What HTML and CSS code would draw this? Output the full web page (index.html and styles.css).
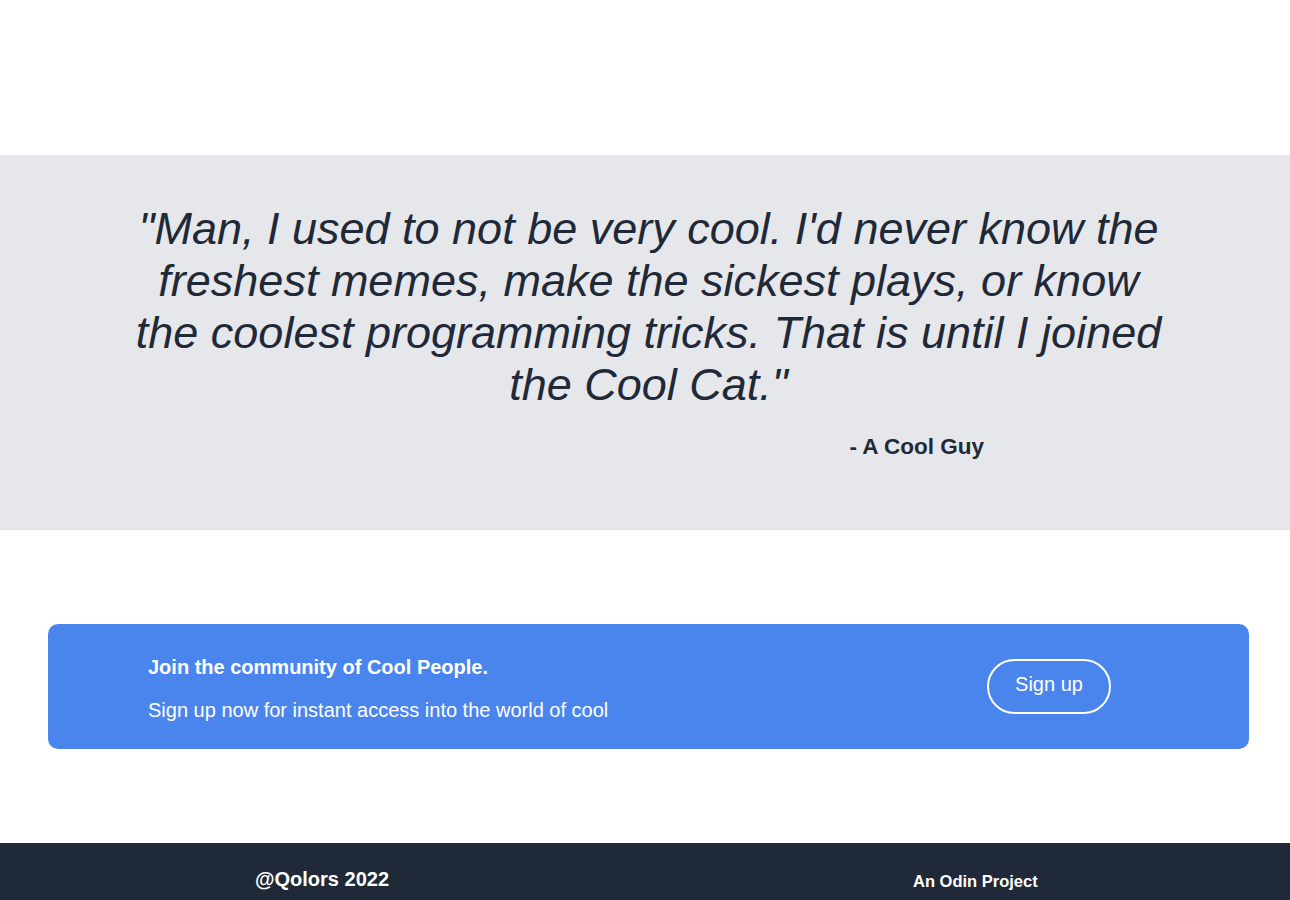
FILE: index.html
```html
<!DOCTYPE html>
<html lang="en">
<head>
<meta charset="utf-8">
<title>Cool Cat</title>
<link rel="stylesheet" href="styles.css">
</head>
<body>
  <div class="top-space"></div>
  <section class="quote-section">
    <blockquote class="quote">"Man, I used to not be very cool. I'd never know the freshest memes, make the sickest plays, or know the coolest programming tricks. That is until I joined the Cool Cat."</blockquote>
    <div class="author-row"><span class="author">- A Cool Guy</span></div>
  </section>
  <section class="cta-section">
    <div class="cta">
      <div class="cta-text">
        <div class="cta-title">Join the community of Cool People.</div>
        <div class="cta-sub">Sign up now for instant access into the world of cool</div>
      </div>
      <button class="cta-btn">Sign up</button>
    </div>
  </section>
  <footer class="footer">
    <div class="copy">@Qolors 2022</div>
    <div class="odin">An Odin Project</div>
  </footer>
</body>
</html>
```
FILE: styles.css
```css
* { box-sizing: border-box; }
html, body { margin: 0; padding: 0; }
body {
  font-family: "Liberation Sans", Arial, sans-serif;
  background: #ffffff;
  color: #1f2937;
}
.top-space { height: 155px; }
.quote-section {
  background: #e5e7eb;
  height: 375px;
  padding: 48px 0 0 7px;
}
.quote {
  margin: 0 auto;
  width: 1040px;
  font-size: 45px;
  line-height: 52px;
  font-style: italic;
  font-weight: 300;
  text-align: center;
  color: #1f2937;
}
.author-row {
  display: flex;
  justify-content: flex-end;
  padding-right: 306px;
  margin-top: 23px;
}
.author {
  font-size: 22.5px;
  font-weight: 700;
  color: #1f2937;
}
.cta-section {
  padding: 94px 41px 94px 48px;
}
.cta {
  background: #4a85ed;
  border-radius: 10px;
  height: 125px;
  display: flex;
  align-items: center;
  justify-content: space-between;
  padding: 4px 138px 0 100px;
  color: #ffffff;
}
.cta-text { display: flex; flex-direction: column; gap: 20px; }
.cta-title { font-size: 20px; font-weight: 700; line-height: 23px; }
.cta-sub { font-size: 20px; line-height: 23px; }
.cta-btn {
  font-family: inherit;
  background: transparent;
  color: #ffffff;
  border: 2px solid #ffffff;
  border-radius: 28px;
  font-size: 20px;
  width: 124px;
  height: 55px;
  padding: 0 0 4px;
  margin-bottom: 4px;
  cursor: pointer;
}
.footer {
  background: #1f2937;
  color: #ffffff;
  height: 100px;
  display: flex;
  align-items: flex-start;
  padding: 25px 0 0 255px;
  font-weight: 700;
}
.copy { font-size: 20px; width: 658px; }
.odin { font-size: 16.5px; padding-top: 4px; }
```
